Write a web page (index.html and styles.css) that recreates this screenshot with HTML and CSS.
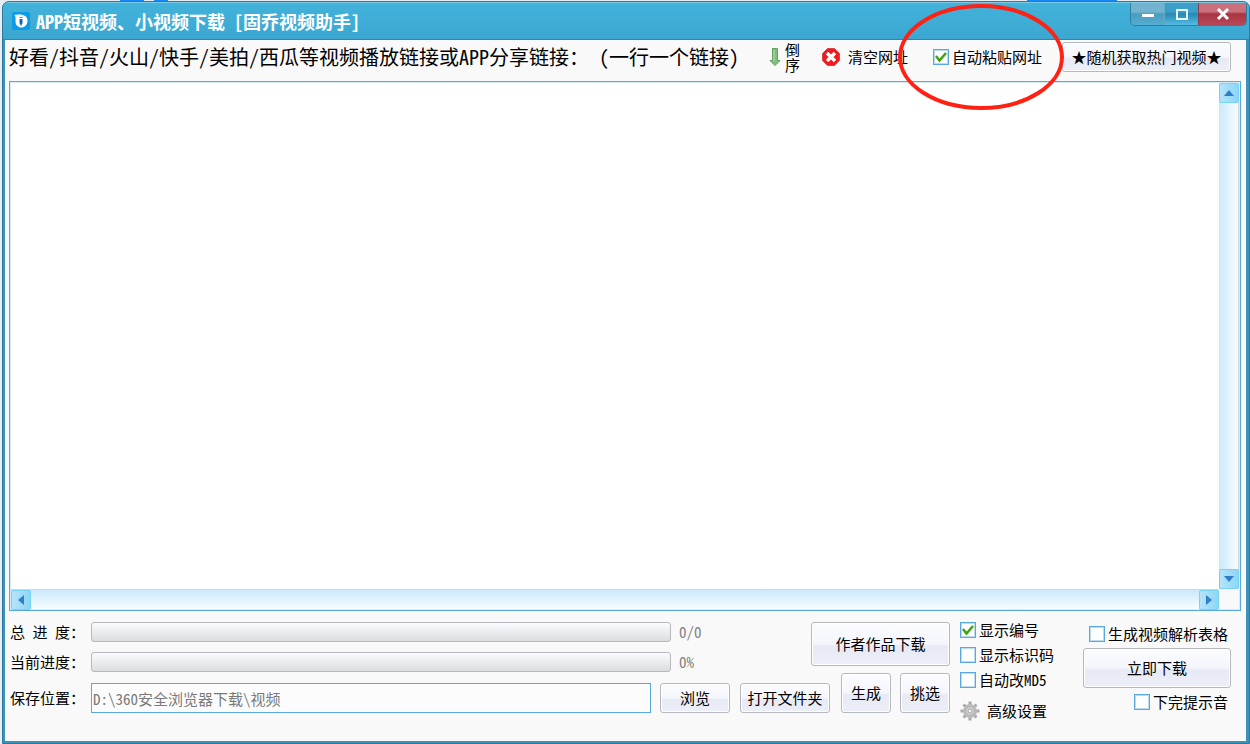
FILE: index.html
```html
<!DOCTYPE html>
<html lang="zh-CN">
<head>
  <meta charset="UTF-8" />
  <meta name="viewport" content="width=device-width, initial-scale=1.0"/>
  <title>APP短视频、小视频下载 [固乔视频助手]</title>
  <link rel="stylesheet" href="styles.css">
</head>
<body>
  <div class="window">
    <header class="titlebar">
      <svg class="app-icon" viewBox="0 0 18 18" aria-hidden="true">
        <rect width="18" height="18" rx="2" fill="#0c9be6"/>
        <path d="M2.500 3C6 2 15.500 1.500 15.500 8.500C15.500 13 12.500 15.500 9.500 15.500C6 15.500 3.500 13 3.500 9.500C3.500 7 4 5 2.500 3Z" fill="#fff"/>
        <path d="M7 6C7 4.500 11 4.500 11 6Z" fill="#3b9fdc"/>
        <path d="M7.500 7H10.500V11L9 14L7.500 11Z" fill="#0a6ab8"/>
      </svg>
      <h1>APP短视频、小视频下载 [固乔视频助手]</h1>
      <div class="window-buttons">
        <button class="win-btn" aria-label="最小化">
          <svg width="14" height="14" viewBox="0 0 14 14"><rect x="1" y="7" width="12" height="3" fill="#fff"/></svg>
        </button>
        <button class="win-btn max" aria-label="最大化">
          <svg width="14" height="14" viewBox="0 0 14 14"><path d="M2 3H12V12H2Z" fill="none" stroke="#e4f6fd" stroke-width="2"/></svg>
        </button>
        <button class="win-btn close" aria-label="关闭">
          <svg width="14" height="14" viewBox="0 0 14 14"><path d="M2 2L12 12M12 2L2 12" stroke="#fff" stroke-width="3"/></svg>
        </button>
      </div>
    </header>

    <main>
      <div class="toolbar">
        <label class="hint" for="links">好看/抖音/火山/快手/美拍/西瓜等视频播放链接或APP分享链接：<span class="note">（一行一个链接）</span></label>
        <button class="plain reverse">
          <svg width="12" height="20" viewBox="0 0 12 20" aria-hidden="true">
            <path d="M3.500 1.500H8.500V13.500H11L6 18.500L1 13.500H3.500Z" fill="#7fbf7c" stroke="#5f9f60"/>
            <path d="M5 3V14" stroke="#b5e0ac"/>
          </svg>
          <span class="vertical">倒序</span>
        </button>
        <button class="plain clear">
          <svg width="18" height="18" viewBox="0 0 18 18" aria-hidden="true">
            <path d="M5.500 0.500H12.500L17.500 5.500V12.500L12.500 17.500H5.500L0.500 12.500V5.500Z" fill="#f4181c" stroke="#d9474b"/>
            <path d="M5 5L13 13M13 5L5 13" stroke="#fff" stroke-width="3.500"/>
          </svg>
          清空网址
        </button>
        <label class="check auto-paste">
          <input type="checkbox" checked>自动粘贴网址
          <svg class="circle-mark" viewBox="0 0 166 108" aria-hidden="true">
            <ellipse cx="83" cy="54" rx="81" ry="51" fill="none" stroke="#ff2113" stroke-width="4"/>
          </svg>
        </label>
        <button class="btn hot">★随机获取热门视频★</button>
      </div>

      <div class="editor">
        <textarea id="links" wrap="off"></textarea>
        <div class="scroll vertical-bar">
          <button aria-label="向上滚动"><svg width="10" height="6" viewBox="0 0 10 6"><path d="M0 6L5 0L10 6Z"/></svg></button>
          <button aria-label="向下滚动"><svg width="10" height="6" viewBox="0 0 10 6"><path d="M0 0L5 6L10 0Z"/></svg></button>
        </div>
        <div class="scroll horizontal-bar">
          <button aria-label="向左滚动"><svg width="6" height="10" viewBox="0 0 6 10"><path d="M6 0L0 5L6 10Z"/></svg></button>
          <button aria-label="向右滚动"><svg width="6" height="10" viewBox="0 0 6 10"><path d="M0 0L6 5L0 10Z"/></svg></button>
        </div>
        <div class="corner"></div>
      </div>

      <div class="bottom">
        <div class="left">
          <div class="progress-area">
            <div class="progress-rows">
              <div class="progress-row">
                <label for="total">总 进 度：</label>
                <progress id="total" value="0" max="100"></progress>
                <span class="value">0/0</span>
              </div>
              <div class="progress-row">
                <label for="current">当前进度：</label>
                <progress id="current" value="0" max="100"></progress>
                <span class="value">0%</span>
              </div>
            </div>
            <button class="btn author">作者作品下载</button>
          </div>
          <div class="save-row">
            <label for="path">保存位置：</label>
            <input type="text" id="path" value="D:\360安全浏览器下载\视频" readonly>
            <button class="btn browse">浏览</button>
            <button class="btn folder">打开文件夹</button>
            <button class="btn tall">生成</button>
            <button class="btn tall">挑选</button>
          </div>
        </div>

        <div class="options">
          <label class="check"><input type="checkbox" checked>显示编号</label>
          <label class="check"><input type="checkbox">显示标识码</label>
          <label class="check"><input type="checkbox">自动改MD5</label>
          <button class="plain settings">
            <svg width="20" height="20" viewBox="0 0 20 20" aria-hidden="true">
              <g stroke="#a9a9a9" stroke-width="3">
                <path d="M10 0.500V19.500M0.500 10H19.500M3.500 3.500L16.500 16.500M16.500 3.500L3.500 16.500"/>
              </g>
              <circle cx="10" cy="10" r="7" fill="#bcbcbc"/>
              <circle cx="10" cy="10" r="4.500" fill="#cfcfcf" stroke="#b0b0b0"/>
              <circle cx="10" cy="10" r="2" fill="#f6f6f6" stroke="#a5a5a5"/>
            </svg>
            高级设置
          </button>
        </div>

        <div class="actions">
          <label class="check"><input type="checkbox">生成视频解析表格</label>
          <button class="btn download">立即下载</button>
          <label class="check"><input type="checkbox">下完提示音</label>
        </div>
      </div>
    </main>
  </div>
</body>
</html>
```
FILE: styles.css
```css
* {
  box-sizing: border-box;
}

body {
  margin: 0;
  padding: 1px 0 0 2px;
  min-height: 100vh;
  display: flex;
  background: linear-gradient(90deg, #e8edf3 0 120px, #1687f5 120px 144px, #e8edf3 144px 154px, #1687f5 154px 168px, #e8edf3 168px 1027px, #1687f5 1027px 1117px, #e8edf3 1117px);
  font-family: "Noto Sans CJK SC", sans-serif;
  /* half-width latin, two letters per hanzi */
  font-feature-settings: "hwid";
  font-size: 15px;
  line-height: 20px;
  color: #000;
}

button,
input,
textarea {
  font: inherit;
  font-feature-settings: inherit;
  color: inherit;
}

button {
  display: flex;
  align-items: center;
  justify-content: center;
  padding: 0;
  white-space: nowrap;
}

.window {
  flex: 1;
  min-width: 0;
  display: flex;
  flex-direction: column;
  background: #3c92b8;
  border: 1px solid #2d7a9e;
  border-radius: 7px 7px 0 0;
  overflow: hidden;
}

/* title bar */
.titlebar {
  height: 38px;
  flex-shrink: 0;
  display: flex;
  align-items: center;
  gap: 6px;
  padding-left: 9px;
  background: linear-gradient(#43b3dc, #3ba7d0);
  border-top: 1px solid #7bcbe6;
  border-bottom: 1px solid #2f86ab;
}

.app-icon {
  width: 18px;
  height: 18px;
}

.titlebar h1 {
  flex: 1;
  margin: 0;
  font-size: 18px;
  font-weight: bold;
  color: #fff;
  white-space: nowrap;
}

.window-buttons {
  display: flex;
  align-self: flex-start;
  height: 23px;
  margin-right: 2px;
  border: 1px solid #2f7f9f;
  border-top: 0;
  border-radius: 0 0 5px 5px;
  overflow: hidden;
}

.win-btn {
  width: 33px;
  border: 0;
  background: linear-gradient(#74b3d0 0 40%, #4a9dc0 50%, #55acd0);
}

.win-btn.max {
  width: 34px;
  background: linear-gradient(#3c9fc8 0 40%, #2889b4 50%, #56bce2);
  border-left: 1px solid #65a9c4;
}

.win-btn.close {
  width: 48px;
  background: linear-gradient(#c8707c 0 40%, #a93440 50%, #b8485a);
  border-left: 1px solid #8a3c4a;
}

main {
  flex: 1;
  display: flex;
  flex-direction: column;
  margin: 0 3px 2px 2px;
  padding: 0 5px 0 4px;
  background: #f9f9f9;
}

/* buttons and tick boxes */
.btn {
  height: 30px;
  border: 1px solid #b5b8bd;
  border-radius: 3px;
  background: linear-gradient(#fbfcff, #f4f6fc 50%, #e7e9f4 55%, #eceef8);
  box-shadow: inset 0 0 0 1px #fff;
}

.plain {
  gap: 8px;
  border: 0;
  background: none;
}

.check {
  display: flex;
  align-items: center;
  gap: 3px;
  white-space: nowrap;
}

.check input {
  appearance: none;
  width: 16px;
  height: 16px;
  margin: 0;
  border: 1px solid #5aa9dc;
  background: #fff center / 12px 12px no-repeat;
  box-shadow: inset 0 0 0 1px #b9dcf2;
}

.check input:checked {
  background-image: url("data:image/svg+xml,%3Csvg xmlns='http://www.w3.org/2000/svg' viewBox='0 0 12 12'%3E%3Cpath d='M1 5L4.500 9.500L11 2' fill='none' stroke='%233fa30c' stroke-width='2.500'/%3E%3C/svg%3E");
}

/* toolbar */
.toolbar {
  height: 41px;
  display: flex;
  align-items: center;
  padding: 0 10px 7px 0;
}

.hint {
  flex: 1;
  font-size: 20px;
  white-space: nowrap;
}

.note {
  margin-left: 10px;
}

.reverse {
  gap: 4px;
}

.vertical {
  width: 15px;
  line-height: 15px;
  white-space: normal;
}

.clear {
  margin-left: 22px;
}

.auto-paste {
  position: relative;
  margin-left: 25px;
}

.circle-mark {
  position: absolute;
  z-index: 2;
  width: 166px;
  height: 108px;
  left: -35px;
  top: -44px;
  pointer-events: none;
}

.hot {
  width: 169px;
  margin-left: 20px;
}

/* link list with its scroll bars */
.editor {
  flex: 1;
  min-height: 200px;
  display: grid;
  grid-template-columns: 1fr 20px;
  grid-template-rows: 1fr 20px;
  padding: 1px;
  border: 1px solid #5aa9dc;
  box-shadow: inset 0 0 0 1px #d5ebf8;
  background: #fff;
}

.editor textarea {
  width: 100%;
  height: 100%;
  border: 0;
  outline: 0;
  resize: none;
  overflow: hidden;
  background: #fff;
}

.scroll {
  display: flex;
  justify-content: space-between;
}

.vertical-bar {
  flex-direction: column;
  background: linear-gradient(90deg, #c9e9fa, #f8fdff);
  border-right: 1px solid #cfd8dd;
}

.horizontal-bar {
  background: linear-gradient(#c9e9fa, #f8fdff);
  border-top: 1px solid #cfd8dd;
}

.corner {
  background: #f9f9f9;
}

.scroll button {
  width: 20px;
  height: 20px;
  flex-shrink: 0;
  border: 1px solid #76d2f7;
  border-radius: 2px;
  background: linear-gradient(90deg, #b5e4fa, #8dd6f6);
}

.scroll path {
  fill: #2f7fc8;
}

/* bottom panel */
.bottom {
  height: 130px;
  display: flex;
  align-items: flex-start;
  padding: 11px 10px 0 0;
}

.left {
  flex: 1;
}

.progress-area {
  height: 51px;
  display: flex;
  gap: 8px;
}

.progress-rows {
  flex: 1;
  display: flex;
  flex-direction: column;
  gap: 10px;
}

.progress-row,
.save-row {
  display: flex;
}

.progress-row label,
.save-row label {
  width: 82px;
  padding-left: 1px;
  white-space: pre;
}

progress {
  appearance: none;
  flex: 1;
  min-width: 0;
  height: 20px;
  border: 1px solid #b5b8bd;
  border-radius: 3px;
  background: linear-gradient(#f9fbfe, #dcdddf);
  overflow: hidden;
}

progress::-webkit-progress-bar {
  background: none;
}

.value {
  width: 132px;
  padding-left: 8px;
  color: #808080;
}

.author {
  width: 139px;
  height: 44px;
}

.save-row {
  align-items: flex-end;
}

.save-row label {
  line-height: 30px;
}

#path {
  flex: 1;
  min-width: 0;
  height: 30px;
  padding: 0 1px;
  border: 1px solid #5aa9dc;
  background: #fcfcfc;
  color: #7a7a7a;
}

.browse {
  width: 70px;
  margin: 0 10px 0 9px;
}

.folder {
  width: 90px;
  margin-right: 2px;
}

.tall {
  width: 50px;
  height: 40px;
  margin-left: 9px;
}

.options {
  width: 123px;
  margin-left: 10px;
  display: flex;
  flex-direction: column;
  align-items: flex-start;
}

.options .check {
  height: 16px;
  margin-bottom: 9px;
}

.settings {
  margin-top: 4px;
  gap: 7px;
}

.actions {
  width: 148px;
  display: flex;
  flex-direction: column;
  align-items: flex-end;
  padding-top: 2px;
}

.actions .check {
  padding-right: 3px;
}

.download {
  width: 100%;
  height: 40px;
  margin: 4px 0;
}
```
